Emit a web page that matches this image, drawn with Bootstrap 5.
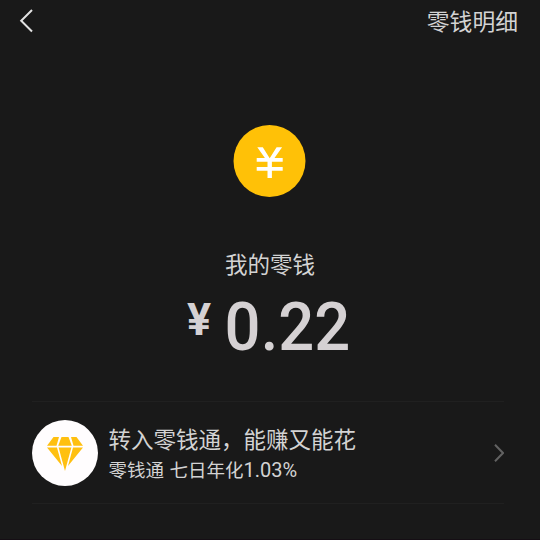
<!DOCTYPE html>
<html lang="zh-CN">
<head>
<meta charset="utf-8">
<meta name="viewport" content="width=device-width, initial-scale=1">
<title>我的零钱</title>
<link href="https://cdn.jsdelivr.net/npm/bootstrap@5.3.0/dist/css/bootstrap.min.css" rel="stylesheet">
<style>
body{background:#191919;color:#d3d3d3;font-family:Roboto,"Noto Sans CJK SC",sans-serif;height:540px;overflow:hidden;border-bottom:1px solid #150e14}
svg{display:block;flex:none}
.topbar{height:42px;padding:0 22px 0 19px}
.detail{font-size:22.8px;line-height:40px;padding-top:3px}
.coin{margin-top:83px;margin-right:1px}
.wallet-label{font-size:22.5px;line-height:34px;margin-top:50px}
.amount{color:#d5d1d3;font-weight:500;height:72px;margin-top:9px;padding-right:2px}
.yen{font-size:45px;line-height:45px;font-weight:700;margin-right:13px;margin-top:6px;transform:translateX(2px)}
.num{font-size:66px;line-height:74px;transform:scaleX(.96)}
.promo{margin:38px 36px 0 32px;height:103px;border-top:1px solid #202020;border-bottom:1px solid #202020}
.gem{width:66px;height:66px;background:#fffdfe;padding-top:3px}
.promo-copy{margin-left:10.5px;padding-top:3px}
.promo-title{font-size:22.5px;line-height:32px}
.promo-sub{font-size:18.5px;line-height:28px;word-spacing:1px}
.rate{font-size:20px}
</style>
</head>
<body>
<header class="topbar d-flex justify-content-between align-items-center">
  <svg width="16" height="24" viewBox="0 0 16 24" fill="none" stroke="#e2e2e2" stroke-width="2"><path d="M13 1 2.2 11.7 13 22.5"/></svg>
  <div class="detail">零钱明细</div>
</header>
<main>
  <section class="d-flex flex-column align-items-center">
    <svg class="coin" width="73" height="73" viewBox="0 0 73 73"><circle cx="36.5" cy="36" r="36" fill="#ffc107"/><path d="M24.3 22.3H29.8L36.7 33.2 43.6 22.3H49.1L41.5 33H49.7V36.7H38.9V42H49.7V45.8H38.9V53H34.5V45.8H23.7V42H34.5V36.7H23.7V33H31.9Z" fill="#fff"/></svg>
    <div class="wallet-label">我的零钱</div>
    <div class="amount d-flex align-items-start"><span class="yen">¥</span><span class="num">0.22</span></div>
  </section>
  <section class="promo d-flex align-items-center">
    <div class="gem rounded-circle d-flex align-items-center justify-content-center flex-shrink-0">
      <svg width="36" height="34" viewBox="0 0 36 34" fill="#ffc010"><path d="M6.5 0H12L9.5 8.8H0ZM14.5 0H21.5L24.8 8.8H11.2ZM24 0H29.5L36 8.8H26.5ZM0 10.6H10L15 29ZM11.6 10.6H24.4L18 34ZM26 10.6H36L21 29Z"/></svg>
    </div>
    <div class="promo-copy flex-grow-1">
      <div class="promo-title">转入零钱通，能赚又能花</div>
      <div class="promo-sub">零钱通 七日年化<span class="rate">1.03%</span></div>
    </div>
    <svg width="12" height="20" viewBox="0 0 12 20" fill="none" stroke="#626262" stroke-width="2"><path d="M3 1.8 11 10 3 18.2"/></svg>
  </section>
</main>
<script src="https://cdn.jsdelivr.net/npm/bootstrap@5.3.0/dist/js/bootstrap.bundle.min.js"></script>
</body>
</html>
